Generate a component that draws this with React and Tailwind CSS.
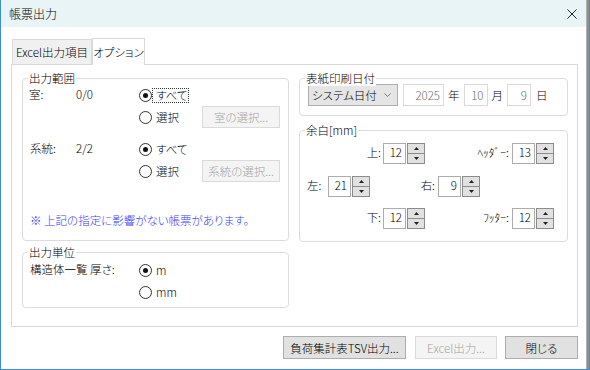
import React from 'react'

// Simple radio: circle + label
function Radio({ checked, focused, children }) {
  return (
    <div className="flex items-center">
      <span className="w-[13px] h-[13px] rounded-full border border-[#333333] bg-white flex items-center justify-center">
        {checked && <span className="w-[5px] h-[5px] rounded-full bg-[#111111]" />}
      </span>
      <span
        className={
          'pl-[3px] pr-[1px] leading-[13px] border border-dotted ' +
          (focused ? 'border-[#333333]' : 'border-transparent')
        }
      >
        {children}
      </span>
    </div>
  )
}

function GroupBox({ title, className, children }) {
  return (
    <div className={'relative border border-[#dcdcdc] rounded-[4px] ' + className}>
      <span className="absolute left-[5px] -top-[9px] bg-white px-[1px] leading-[16px]">{title}</span>
      {children}
    </div>
  )
}

function Button({ disabled, className, children }) {
  return (
    <div
      className={
        'h-[22px] flex items-center justify-center border leading-[16px] ' +
        (disabled
          ? 'bg-[#f4f4f4] border-[#dadada] text-[#a3a3a3] '
          : 'bg-[#e1e1e1] border-[#adadad] text-black ') +
        className
      }
    >
      {children}
    </div>
  )
}

function Spinner({ value }) {
  return (
    <div className="flex">
      <div className="w-[23px] h-[21px] border border-[#acacac] bg-white text-right pr-[3px] leading-[16px]">
        {value}
      </div>
      <div className="ml-[1px] w-[18px] h-[21px] flex flex-col">
        <div className="h-[11px] bg-[#e1e1e1] border border-[#8c8c8c] flex items-center justify-center">
          <svg width="5" height="3" viewBox="0 0 5 3">
            <polygon points="2.5,0 5,3 0,3" fill="#222" />
          </svg>
        </div>
        <div className="h-[10px] bg-[#e1e1e1] border border-t-0 border-[#8c8c8c] flex items-center justify-center">
          <svg width="5" height="3" viewBox="0 0 5 3">
            <polygon points="0,0 5,0 2.5,3" fill="#222" />
          </svg>
        </div>
      </div>
    </div>
  )
}

function DateBox({ value, className }) {
  return (
    <div className={'h-[22px] border border-[#d9d9d9] bg-white text-right pr-[3px] text-[#6d6d6d] leading-[20px] ' + className}>
      {value}
    </div>
  )
}

export default function App() {
  return (
    <div className="w-[590px] h-[370px] flex bg-white text-[11.5px] font-light [font-feature-settings:'palt'] whitespace-nowrap text-black font-['Noto_Sans_CJK_JP',sans-serif] border-l border-r border-b border-[#3d8ee0] overflow-hidden">
      <div className="flex-1 flex flex-col">
        {/* Title bar */}
        <div className="h-[27px] bg-[#e9f4f7] flex items-center pl-[8px] pr-[9px]">
          <span className="leading-[16px] text-[12px]">帳票出力</span>
          <div className="ml-auto">
            <svg width="10" height="10" viewBox="0 0 10 10">
              <path d="M0.5 0.5 L9.5 9.5 M9.5 0.5 L0.5 9.5" stroke="#222" strokeWidth="1" />
            </svg>
          </div>
        </div>

        {/* Tabs */}
        <div className="mt-[11px] ml-[10px] h-[26px] flex items-end">
          <div className="ml-[1px] w-[80px] h-[25px] bg-[#f0f0f0] border border-b-0 border-[#d9d9d9] flex items-center justify-center leading-[16px]">
            Excel出力項目
          </div>
          <div className="relative z-10 -mb-px w-[53px] h-[27px] bg-white border border-b-0 border-[#d9d9d9] flex items-center justify-center leading-[16px]">
            オプション
          </div>
        </div>

        {/* Tab panel */}
        <div className="ml-[10px] w-[567px] h-[263px] border border-[#d9d9d9] flex pt-[13px] pl-[10px]">
          {/* Left column */}
          <div className="w-[267px] flex flex-col">
            <GroupBox title="出力範囲" className="h-[163px] pt-[5px] pl-[6px]">
              <div className="h-[22px] flex items-center">
                <span className="w-[47px]">室:</span>
                <span className="w-[63px]">0/0</span>
                <div className="w-[63px]">
                  <Radio checked focused>すべて</Radio>
                </div>
              </div>
              <div className="h-[22px] flex items-center">
                <span className="w-[110px]" />
                <div className="w-[63px]">
                  <Radio>選択</Radio>
                </div>
                <Button disabled className="w-[78px]">室の選択...</Button>
              </div>
              <div className="mt-[10px] h-[22px] flex items-center">
                <span className="w-[47px] pl-[1px]">系統:</span>
                <span className="w-[63px]">2/2</span>
                <div className="w-[63px]">
                  <Radio checked>すべて</Radio>
                </div>
              </div>
              <div className="h-[22px] flex items-center">
                <span className="w-[110px]" />
                <div className="w-[63px]">
                  <Radio>選択</Radio>
                </div>
                <Button disabled className="w-[78px]">系統の選択...</Button>
              </div>
              <div className="mt-[30px] ml-[1px] leading-[16px] text-[#3b3bff]">
                ※ 上記の指定に影響がない帳票があります。
              </div>
            </GroupBox>

            <GroupBox title="出力単位" className="mt-[11px] h-[56px] pt-[6px] pl-[7px]">
              <div className="h-[22px] flex items-center">
                <span className="w-[109px]">構造体一覧 厚さ:</span>
                <Radio checked>m</Radio>
              </div>
              <div className="h-[22px] flex items-center">
                <span className="w-[109px]" />
                <Radio>mm</Radio>
              </div>
            </GroupBox>
          </div>

          {/* Right column */}
          <div className="ml-[10px] w-[269px] flex flex-col">
            <GroupBox title="表紙印刷日付" className="h-[38px] pt-[5px] pl-[8px]">
              <div className="flex items-center">
                <div className="w-[90px] h-[22px] bg-[#e5e5e5] border border-[#adadad] flex items-center pl-[3px] pr-[6px] leading-[16px]">
                  <span>システム日付</span>
                  <svg className="ml-auto" width="7" height="4" viewBox="0 0 7 4">
                    <path d="M0.5 0.5 L3.5 3.5 L6.5 0.5" fill="none" stroke="#777" strokeWidth="1" />
                  </svg>
                </div>
                <DateBox value="2025" className="ml-[5px] w-[41px]" />
                <span className="ml-[4px] leading-[16px]">年</span>
                <DateBox value="10" className="ml-[4px] w-[24px]" />
                <span className="ml-[4px] leading-[16px]">月</span>
                <DateBox value="9" className="ml-[4px] w-[24px]" />
                <span className="ml-[5px] leading-[16px]">日</span>
              </div>
            </GroupBox>

            <GroupBox title="余白[mm]" className="mt-[14px] h-[112px] pt-[11px]">
              <div className="h-[22px] flex items-center">
                <span className="w-[83px] text-right pr-[2px]">上:</span>
                <Spinner value="12" />
                <span className="w-[87px] text-right pr-[3px]">ﾍｯﾀﾞｰ:</span>
                <Spinner value="13" />
              </div>
              <div className="mt-[11px] h-[22px] flex items-center">
                <span className="w-[28px] pl-[7px]">左:</span>
                <Spinner value="21" />
                <span className="w-[68px] text-right pr-[3px]">右:</span>
                <Spinner value="9" />
              </div>
              <div className="mt-[10px] h-[22px] flex items-center">
                <span className="w-[83px] text-right pr-[2px]">下:</span>
                <Spinner value="12" />
                <span className="w-[87px] text-right pr-[3px]">ﾌｯﾀｰ:</span>
                <Spinner value="12" />
              </div>
            </GroupBox>
          </div>
        </div>

        {/* Bottom buttons */}
        <div className="mt-[9px] pr-[8px] flex justify-end gap-[8px]">
          <Button className="w-[123px] h-[23px]">負荷集計表TSV出力...</Button>
          <Button disabled className="w-[82px] h-[23px] ml-[1px]">Excel出力...</Button>
          <Button className="w-[73px] h-[23px]">閉じる</Button>
        </div>
      </div>
      <div className="w-[3px] bg-[#8e8e8e] border-l border-[#b0b0b0]" />
    </div>
  )
}
